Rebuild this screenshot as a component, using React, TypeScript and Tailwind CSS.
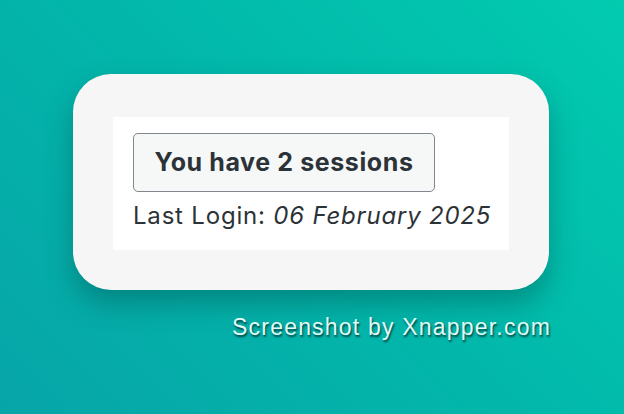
import React from "react";

export default function App() {
  return (
    <div className="w-[624px] h-[414px] bg-[linear-gradient(225deg,#02cbb0_0%,#02b7aa_50%,#07a5a8_100%)] flex flex-col items-center pt-[74px] font-['Inter','Liberation_Sans',sans-serif] overflow-hidden">
      {/* card */}
      <div className="w-[476px] h-[216px] ml-[-2px] bg-[#f6f6f6] rounded-[38px] shadow-[0_14px_28px_rgba(0,60,60,0.35)] px-[40px] pt-[43px]">
        <div className="w-[396px] h-[133px] bg-white px-[20px] pt-[16px] text-[#2c3338]">
          <button className="h-[59px] w-[302px] bg-[#f6f7f7] border-[1.5px] border-[#80868b] rounded-[5px] text-[25px] font-bold tracking-[0.6px]">
            You have 2 sessions
          </button>
          <p className="mt-[8px] text-[24px] leading-[32px] tracking-[0.8px] whitespace-nowrap">
            Last Login: <em className="italic">06 February 2025</em>
          </p>
        </div>
      </div>
      {/* watermark */}
      <div className="w-full flex justify-end pr-[73px] mt-[20px]">
        <span className="text-[23px] tracking-[1.2px] text-[#e2fbf5] font-['Liberation_Sans',sans-serif] [text-shadow:1px_2px_2px_rgba(0,40,40,0.8)]">
          Screenshot by Xnapper.com
        </span>
      </div>
    </div>
  );
}
